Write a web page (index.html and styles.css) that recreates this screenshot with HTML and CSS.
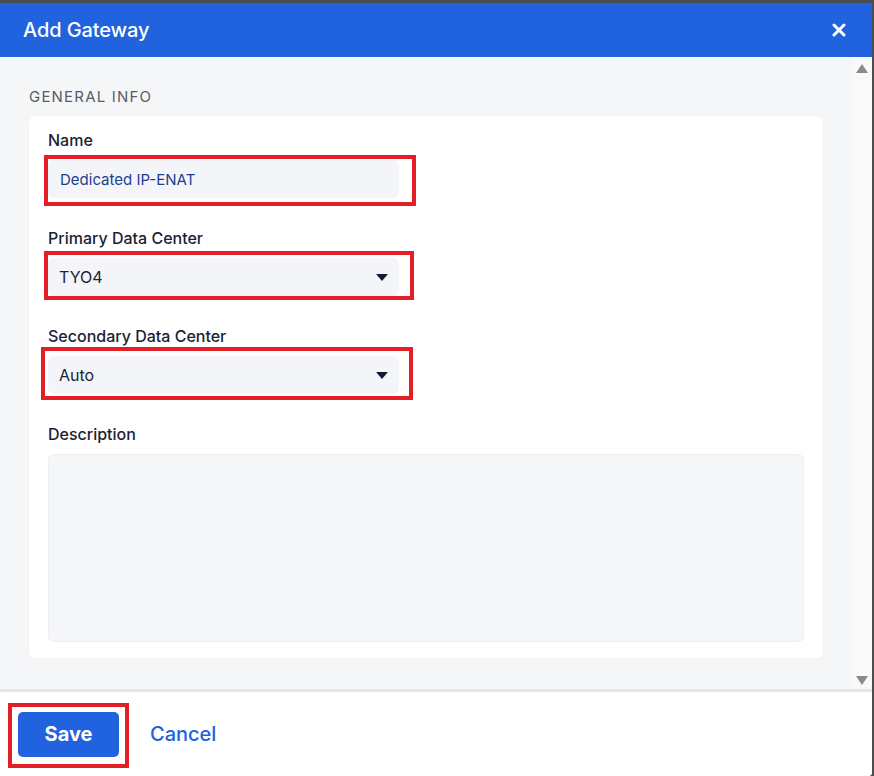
FILE: index.html
```html
<!DOCTYPE html>
<html lang="en">
<head>
<meta charset="utf-8">
<title>Add Gateway</title>
<link rel="stylesheet" href="styles.css">
</head>
<body>
<div class="frame">
  <div class="dialog">
    <header class="header">
      <h1 class="title">Add Gateway</h1>
      <button class="close" aria-label="Close">
        <svg width="14" height="14" viewBox="0 0 14 14"><path d="M2 2 L12 12 M12 2 L2 12" stroke="#fff" stroke-width="3" stroke-linecap="round"/></svg>
      </button>
    </header>
    <div class="body">
      <div class="content">
        <div class="section-title">GENERAL INFO</div>
        <div class="card">
          <div class="field">
            <label class="label">Name</label>
            <div class="control annot annot-name">
              <div class="input input-value">Dedicated IP-ENAT</div>
            </div>
          </div>
          <div class="field">
            <label class="label">Primary Data Center</label>
            <div class="control annot annot-primary">
              <div class="input select"><span>TYO4</span><span class="caret"></span></div>
            </div>
          </div>
          <div class="field">
            <label class="label">Secondary Data Center</label>
            <div class="control annot annot-secondary">
              <div class="input select"><span>Auto</span><span class="caret"></span></div>
            </div>
          </div>
          <div class="field field-last">
            <label class="label">Description</label>
            <div class="textarea"></div>
          </div>
        </div>
      </div>
      <div class="scrollbar">
        <span class="arrow-up"></span>
        <span class="arrow-down"></span>
      </div>
    </div>
    <footer class="footer">
      <div class="annot annot-save"><button class="btn-save">Save</button></div>
      <button class="btn-cancel">Cancel</button>
    </footer>
  </div>
</div>
</body>
</html>
```

FILE: styles.css
```css
* { box-sizing: border-box; }
html, body { margin: 0; padding: 0; }
body {
  font-family: Inter, "Noto Sans", sans-serif;
  background: #4d4d4f;
  width: 874px;
  height: 776px;
  overflow: hidden;
}
.frame {
  padding-top: 3px;
  padding-right: 2px;
  height: 776px;
}
.dialog {
  height: 773px;
  display: flex;
  flex-direction: column;
  background: #fff;
  border-bottom-right-radius: 4px;
  overflow: hidden;
}
.header {
  height: 54px;
  flex: none;
  background: #2162de;
  display: flex;
  align-items: center;
  justify-content: space-between;
  padding: 0 23px 0 23px;
}
.title {
  margin: 0;
  color: #fff;
  font-size: 20px;
  font-weight: 500;
  letter-spacing: -0.1px;
}
.close {
  background: none;
  border: 0;
  padding: 0;
  width: 14px;
  height: 14px;
  margin-right: 3px;
  display: flex;
}
.body {
  flex: 1;
  display: flex;
  background: #f5f6f8;
  border-bottom: 3px solid #e2e6ec;
}
.content {
  flex: 1;
  padding: 30px 29px 0 29px;
}
.section-title {
  font-size: 15px;
  line-height: 20px;
  color: #5a5d63;
  letter-spacing: 1.2px;
  margin-bottom: 9px;
}
.card {
  background: #fff;
  border-radius: 6px;
  padding: 13px 19px 16px 19px;
  box-shadow: 0 0 3px rgba(0,0,0,0.03);
}
.field { margin-bottom: 29px; }
.field-last { margin-bottom: 0; }
.label {
  display: block;
  font-size: 16px;
  line-height: 22px;
  font-weight: 500;
  color: #1b2233;
  margin-bottom: 9px;
}
.control {
  position: relative;
  width: 351px;
}
.input {
  height: 38px;
  background: #f3f5f8;
  border-radius: 6px;
  padding: 0 12px;
  font-size: 16px;
  display: flex;
  align-items: center;
  color: #1b2233;
}
.input-value { color: #1d3f8f; font-size: 15px; }
.select { justify-content: space-between; padding-left: 11px; padding-right: 11px; }
.caret {
  width: 0;
  height: 0;
  border-left: 6.5px solid transparent;
  border-right: 6.5px solid transparent;
  border-top: 7px solid #0f1a33;
  border-radius: 1px;
}
.textarea {
  height: 188px;
  background: #f5f6f8;
  border: 1px solid #eceef2;
  border-radius: 6px;
}
.annot { position: relative; }
.annot::after {
  content: "";
  position: absolute;
  border: 4px solid #e21f26;
  pointer-events: none;
}
.annot-name::after { left: -4px; right: -17px; top: -5px; bottom: -8px; }
.annot-primary::after { left: -4px; right: -15px; top: -7px; bottom: -4px; }
.annot-secondary::after { left: -7px; right: -14px; top: -9px; bottom: -6px; }
.annot-save::after { left: -10px; right: -10px; top: -9px; bottom: -11px; }
.scrollbar {
  width: 20px;
  flex: none;
  background: #f9f9fa;
  position: relative;
}
.arrow-up, .arrow-down {
  position: absolute;
  left: 4px;
  width: 0;
  height: 0;
  border-left: 6.5px solid transparent;
  border-right: 6.5px solid transparent;
}
.arrow-up { top: 7px; border-bottom: 9px solid #8a8a8a; }
.arrow-down { bottom: 4px; border-top: 9px solid #8a8a8a; }
.footer {
  height: 84px;
  flex: none;
  display: flex;
  align-items: center;
  padding: 0 0 0 18px;
  gap: 31px;
  background: #fff;
}
.btn-save {
  width: 101px;
  height: 45px;
  border: 0;
  border-radius: 5px;
  background: #2162de;
  color: #fff;
  font-family: Inter, "Noto Sans", sans-serif;
  font-size: 20px;
  font-weight: 700;
  display: block;
}
.btn-cancel {
  border: 0;
  background: none;
  padding: 0;
  color: #2162de;
  font-family: Inter, "Noto Sans", sans-serif;
  font-size: 20px;
  font-weight: 500;
}
```
